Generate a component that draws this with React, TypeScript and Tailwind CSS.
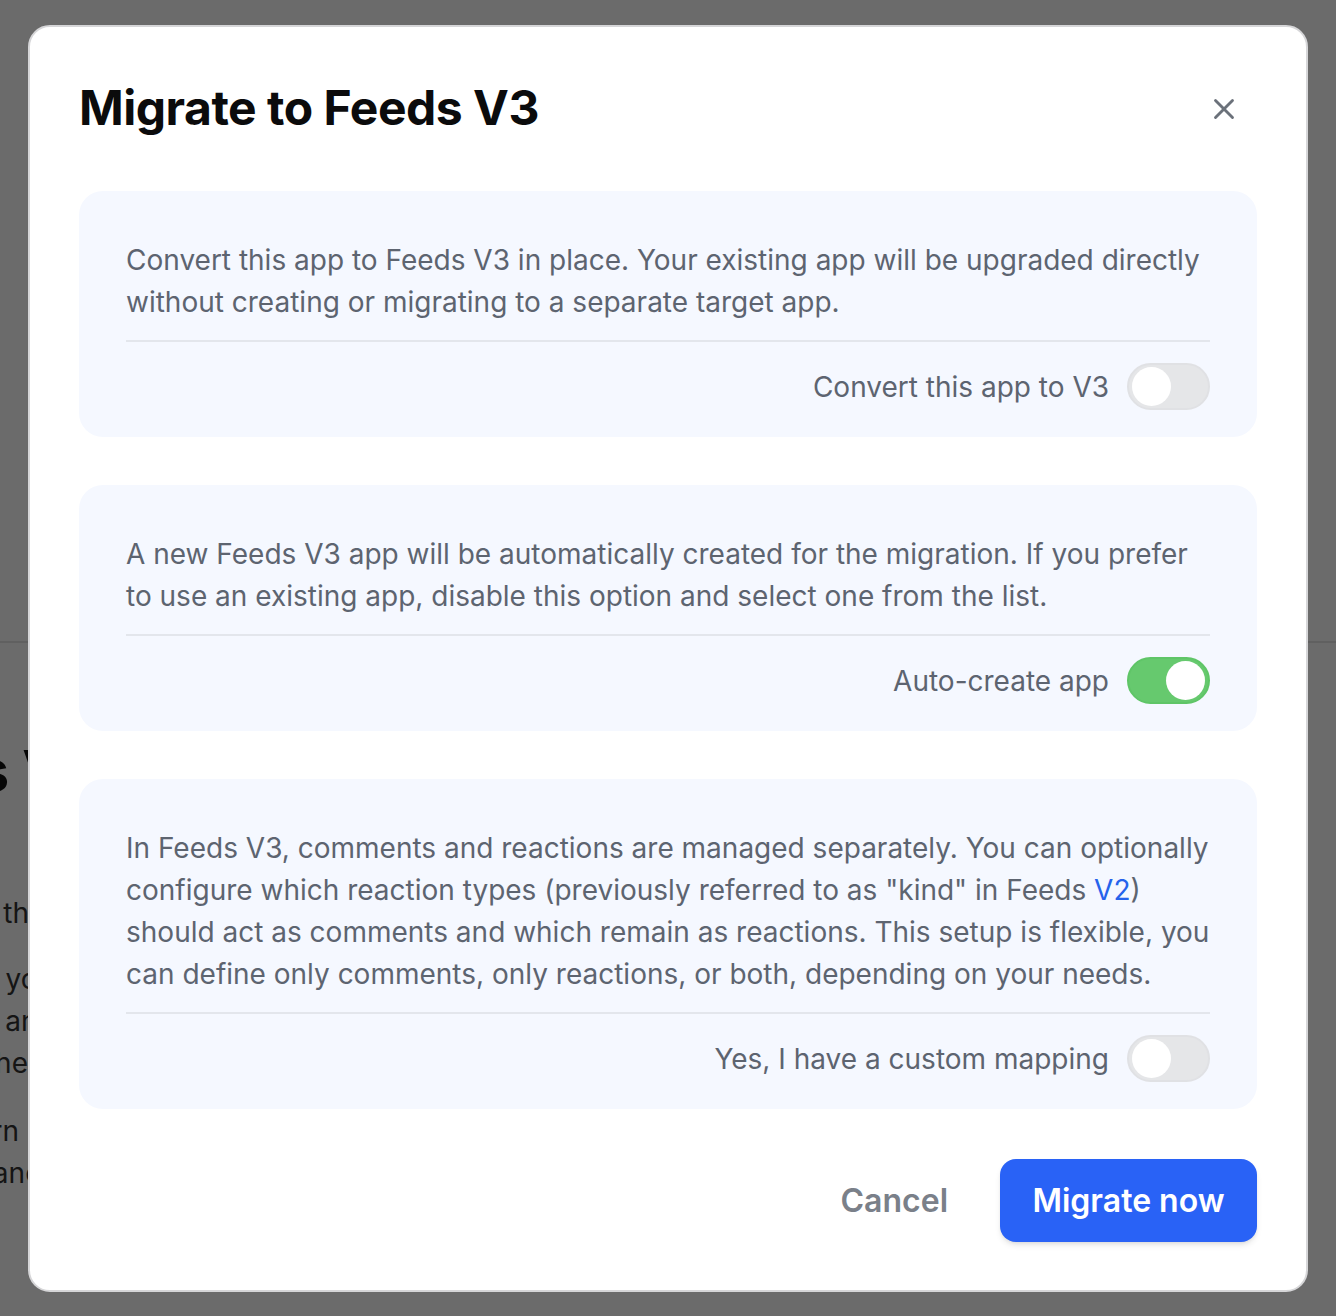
import { X } from "lucide-react";

const font = { fontFamily: "Inter, 'Noto Sans', sans-serif" };

function Toggle({ on }: { on?: boolean }) {
  return (
    <div
      className={
        on
          ? "flex h-[47px] w-[83px] shrink-0 items-center justify-end rounded-full border-2 border-[#5fc567] bg-[#66c96e] p-[3px]"
          : "flex h-[47px] w-[83px] shrink-0 items-center justify-start rounded-full border-2 border-[#e0e1e4] bg-[#e5e6e8] p-[3px]"
      }
    >
      <div className="h-[39px] w-[39px] rounded-full bg-white" />
    </div>
  );
}

function OptionCard({ label, on, children }: { label: string; on?: boolean; children: React.ReactNode }) {
  return (
    <div className="rounded-[24px] bg-[#f5f8ff] px-[47px] pt-[48px] pb-[27px]">
      <p className="text-[28px] leading-[42px] text-[#5d6470]">{children}</p>
      <div className="mt-[17px] border-t-2 border-[#e3e6ec]" />
      <div className="mt-[21px] flex items-center justify-end gap-[18px]">
        <span className="text-[28px] leading-[42px] text-[#5d6470]">{label}</span>
        <Toggle on={on} />
      </div>
    </div>
  );
}

export default function App() {
  return (
    <div className="relative h-[1316px] w-[1336px] overflow-hidden bg-white" style={font}>
      {/* page behind the dialog */}
      <div className="h-[643px] border-b-2 border-[#e5e5e5]" />
      <div className="-ml-[412px] w-[1900px] pt-[96px]">
        <h1 className="-ml-[35px] text-[56px] font-bold leading-[64px] text-[#111]">Migrate to Feeds V3</h1>
        <p className="mt-[89px] text-[28px] leading-[42px] text-[#333]">
          Upgrade your existing feeds to the new Feeds V3 infrastructure with improved performance and a set of
        </p>
        <p className="mt-[24px] text-[28px] leading-[42px] text-[#333]">
          The migration tool will re-index your data and keep all activity history intact for your users
          <br />
          Feeds V3 offers better perform and richer feature set across all apps and products
          <br />
          We recommend you to create the target app first before running the migration
        </p>
        <p className="mt-[26px] text-[28px] leading-[42px] text-[#333]">
          Read the documentation to learn how custom reaction types are mapped in the new product
          <br />
          Comments and reactions are handled separately and mapped through the V3 feed
        </p>
      </div>

      <div className="absolute inset-0 bg-black/[0.58]" />

      {/* dialog */}
      <div className="absolute left-[28px] top-[25px] w-[1280px] rounded-[22px] border-2 border-[#d6d6d8] bg-white px-[49px] pb-[48px] pt-[52px]">
        <div className="flex items-start justify-between">
          <h2 className="text-[48px] font-bold leading-[58px] tracking-[-0.01em] text-[#0b0b0c]">
            Migrate to Feeds V3
          </h2>
          <button className="mr-[16px] mt-[13px] text-[#6b717a]">
            <X className="h-[34px] w-[34px]" strokeWidth={2} />
          </button>
        </div>

        <div className="mt-[54px] flex flex-col gap-[48px]">
          <OptionCard label="Convert this app to V3">
            Convert this app to Feeds V3 in place. Your existing app will be upgraded directly without creating or
            migrating to a separate target app.
          </OptionCard>
          <OptionCard label="Auto-create app" on>
            A new Feeds V3 app will be automatically created for the migration. If you prefer to use an existing app,
            disable this option and select one from the list.
          </OptionCard>
          <OptionCard label="Yes, I have a custom mapping">
            In Feeds V3, comments and reactions are managed separately. You can optionally configure which reaction
            types (previously referred to as "kind" in Feeds <span className="text-[#2563eb]">V2</span>) should act as
            comments and which remain as reactions. This setup is flexible, you can define only comments, only
            reactions, or both, depending on your needs.
          </OptionCard>
        </div>

        <div className="mt-[50px] flex items-center justify-end gap-[52px]">
          <button className="text-[32px] font-semibold text-[#7a8089]">Cancel</button>
          <button className="h-[83px] w-[257px] rounded-[16px] bg-[#2962f6] text-[32px] font-semibold text-white shadow-md">
            Migrate now
          </button>
        </div>
      </div>
    </div>
  );
}
